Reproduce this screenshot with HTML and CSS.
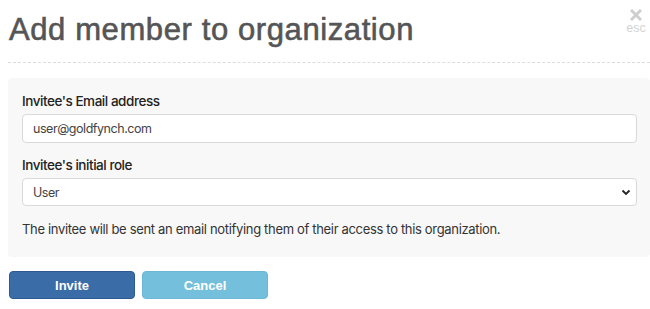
FILE: index.html
```html
<!DOCTYPE html>
<html>
<head>
<meta charset="utf-8">
<link rel="stylesheet" href="styles.css">
</head>
<body>
<div class="modal">
  <header class="modal-header">
    <h1 class="modal-title">Add member to organization</h1>
    <div class="close">
      <svg class="close-x" width="12" height="12" viewBox="0 0 12 12"><path d="M2 2 L10 10 M10 2 L2 10" stroke="#cfcfcf" stroke-width="3" stroke-linecap="square"/></svg>
      <span class="close-esc">esc</span>
    </div>
  </header>
  <div class="panel">
    <label class="field-label">Invitee's Email address</label>
    <input class="field-input" type="text" value="user@goldfynch.com">
    <label class="field-label second">Invitee's initial role</label>
    <div class="select-wrap">
      <select class="field-select"><option>User</option></select>
      <svg class="chevron" width="10" height="7" viewBox="0 0 10 7"><path d="M1.5 1.5 L5 5 L8.5 1.5" fill="none" stroke="#222" stroke-width="1.8"/></svg>
    </div>
    <p class="help">The invitee will be sent an email notifying them of their access to this organization.</p>
  </div>
  <div class="actions">
    <button class="btn btn-primary">Invite</button>
    <button class="btn btn-info">Cancel</button>
  </div>
</div>
</body>
</html>
```
FILE: styles.css
```css
html, body {
  margin: 0;
  padding: 0;
  background: #fff;
}
body {
  font-family: Inter, "Liberation Sans", sans-serif;
  color: #333;
}
.modal {
  padding: 0 0 0 8px;
}
.modal-header {
  display: flex;
  justify-content: space-between;
  align-items: flex-start;
  height: 62px;
  border-bottom: 1px dashed #dcdcdc;
  margin-bottom: 15px;
}
.modal-title {
  margin: 0;
  padding-top: 13px;
  padding-left: 1px;
  font-family: "Liberation Sans", Arial, sans-serif;
  font-weight: normal;
  font-size: 31px;
  line-height: 34px;
  letter-spacing: 0.6px;
  color: #555;
  -webkit-text-stroke: 0.6px #555;
}
.close {
  display: flex;
  flex-direction: column;
  align-items: center;
  padding-top: 9px;
  padding-right: 3px;
  width: 22px;
}
.close-x {
  display: block;
}
.close-esc {
  font-family: "Liberation Sans", Arial, sans-serif;
  font-size: 12.5px;
  line-height: 14px;
  color: #d4d4d4;
}
.panel {
  background: #f8f8f8;
  border-radius: 4px;
  padding: 15px 13px 20px 14px;
  display: flex;
  flex-direction: column;
}
.field-label {
  font-size: 13.5px;
  font-weight: 500;
  letter-spacing: -0.45px;
  color: #222;
  line-height: 16px;
  margin-bottom: 5px;
}
.field-label.second {
  margin-top: 14px;
}
.field-input, .field-select {
  box-sizing: border-box;
  width: 100%;
  height: 29px;
  border: 1px solid #d9d9d9;
  border-radius: 4px;
  background: #fff;
  font-family: Inter, "Liberation Sans", sans-serif;
  font-size: 12.5px;
  letter-spacing: -0.45px;
  color: #444;
  padding: 0 10px;
  margin: 0;
  outline: none;
}
.select-wrap {
  position: relative;
}
.field-select {
  -webkit-appearance: none;
  appearance: none;
  height: 28px;
}
.chevron {
  position: absolute;
  right: 6px;
  top: 11px;
}
.help {
  margin: 15px 0 0 0;
  font-size: 13px;
  line-height: 16px;
  letter-spacing: -0.33px;
  color: #333;
}
.actions {
  display: flex;
  gap: 7px;
  margin-top: 14px;
  padding-left: 1px;
}
.btn {
  box-sizing: border-box;
  width: 126px;
  height: 28px;
  border-radius: 4px;
  font-family: "Liberation Sans", Arial, sans-serif;
  font-size: 13px;
  font-weight: bold;
  color: #fff;
  cursor: pointer;
}
.btn-primary {
  background: #3a6ca8;
  border: 1px solid #2d5a92;
}
.btn-info {
  background: #74bfdb;
  border: 1px solid #6bb8d6;
}
```
